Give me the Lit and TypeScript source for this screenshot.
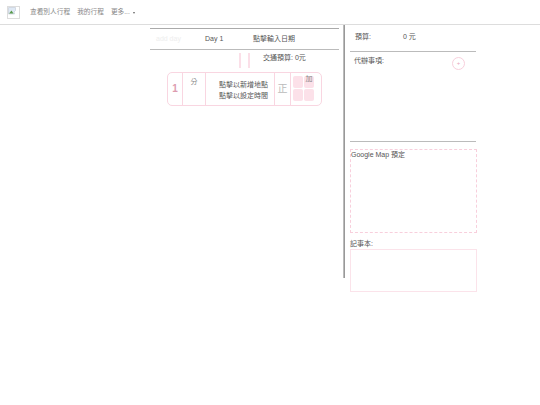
import { LitElement, html, css } from "lit";
import { customElement } from "lit/decorators.js";

@customElement("app-root")
export class AppRoot extends LitElement {
  static styles = css`
    :host { display: block; width: 540px; height: 405px; overflow: hidden; background: #fff;
      font-family: "Liberation Sans", "Noto Sans CJK TC", sans-serif; font-size: 7px; color: #555; line-height: 10px; }
    .nav { height: 25px; box-sizing: border-box; border-bottom: 1px solid #ddd; display: flex; align-items: center; padding: 0 0 0 7px; color: #888; font-size: 6.7px; }
    .logo { width: 13px; height: 13px; box-sizing: border-box; border: 1px solid #ddd; margin-right: 10px; display: block; }
    .nav span { margin-right: 7px; }
    .caret { width: 0; height: 0; border: 1.5px solid transparent; border-top: 2px solid #666; border-bottom: 0; margin-top: 1px; }
    .nav .more { margin-right: 3px; }
    .main { display: flex; padding: 0 0 0 150px; }
    .left { width: 189px; padding-top: 3px; }
    .days { height: 22px; box-sizing: border-box; border-top: 1px solid #aaa; border-bottom: 1px solid #bbb; display: flex; align-items: center; }
    .add { width: 55px; padding-left: 6px; box-sizing: border-box; color: #eee; }
    .dayn { width: 48px; }
    .budget { display: flex; height: 22px; }
    .bars { display: flex; gap: 7px; margin: 3px 0 0 89px; width: 24px; }
    .bars i { width: 2px; height: 15px; background: #fbdfe8; }
    .budget span { padding-top: 3px; }
    .card { margin: 0 0 0 17px; width: 155px; height: 34px; box-sizing: border-box; border: 1px solid #f9d6e1; border-radius: 5px; display: flex; }
    .card > div { border-right: 1px solid #f9d6e1; box-sizing: border-box; }
    .num { width: 15px; display: flex; align-items: center; justify-content: center; color: #dd9cb0; font-size: 10px; font-weight: 700; }
    .fen { width: 23px; text-align: center; padding-top: 4px; color: #888; }
    .text { width: 69px; text-align: right; padding: 6px 6px 0 0; line-height: 11px; }
    .zheng { width: 16px; display: flex; align-items: center; justify-content: center; font-size: 10px; color: #bbb; }
    .grid { flex: 1; border-right: 0 !important; display: grid; grid-template-columns: 10px 10px; grid-template-rows: 12px 12px; gap: 1px; padding: 3px 0 0 2px; }
    .grid b { background: #fce1e9; border-radius: 2px; font-weight: 400; color: #888; text-align: center; line-height: 6px; }
    .side { width: 1px; margin: 0 5px 0 4px; height: 253px; background: #999; border-left: 1px solid #bbb; }
    .right { width: 127px; padding-top: 2px; }
    .rb { display: flex; height: 24px; box-sizing: border-box; padding: 5px 0 0 5px; }
    .rb span:first-child { width: 48px; }
    .todo { width: 126px; height: 91px; box-sizing: border-box; border-top: 1px solid #bbb; border-bottom: 1px solid #bbb; padding: 4px 0 0 4px; display: flex; justify-content: space-between; }
    .plus { width: 13px; height: 13px; box-sizing: border-box; border: 1px solid #f8cfdc; border-radius: 50%; margin: 1px 11px 0 0; color: #e8a8bc; text-align: center; line-height: 10px; font-size: 6px; }
    .map { margin-top: 7px; width: 127px; height: 84px; box-sizing: border-box; border: 1px dashed #f8cfdc; padding: 0; }
    .memo-l { margin-top: 6px; height: 10px; }
    .memo { width: 127px; height: 43px; box-sizing: border-box; border: 1px solid #fbe3ea; }
  `;

  render() {
    return html`
      <div class="nav">
        <svg class="logo" viewBox="0 0 11 11"><path d="M0.500 0.500h7v3l-1.500 1.500 .5 2h-6z" fill="#dfe9f5" stroke="#b4bfcc" stroke-width=".5"/><path d="M1 6.500l2.500-3 2 3z" fill="#5a9a4a"/></svg>
        <span>查看別人行程</span><span>我的行程</span><span class="more">更多...</span><i class="caret"></i>
      </div>
      <div class="main">
        <div class="left">
          <div class="days"><span class="add">add day</span><span class="dayn">Day 1</span><span>點擊輸入日期</span></div>
          <div class="budget"><div class="bars"><i></i><i></i></div><span>交通預算: 0元</span></div>
          <div class="card">
            <div class="num">1</div>
            <div class="fen">分</div>
            <div class="text">點擊以新增地點<br />點擊以設定時間</div>
            <div class="zheng">正</div>
            <div class="grid"><b></b><b>加</b><b></b><b></b></div>
          </div>
        </div>
        <div class="side"></div>
        <div class="right">
          <div class="rb"><span>預算:</span><span>0 元</span></div>
          <div class="todo"><span>代辦事項:</span><div class="plus">+</div></div>
          <div class="map">Google Map 預定</div>
          <div class="memo-l">記事本:</div>
          <div class="memo"></div>
        </div>
      </div>
    `;
  }
}
